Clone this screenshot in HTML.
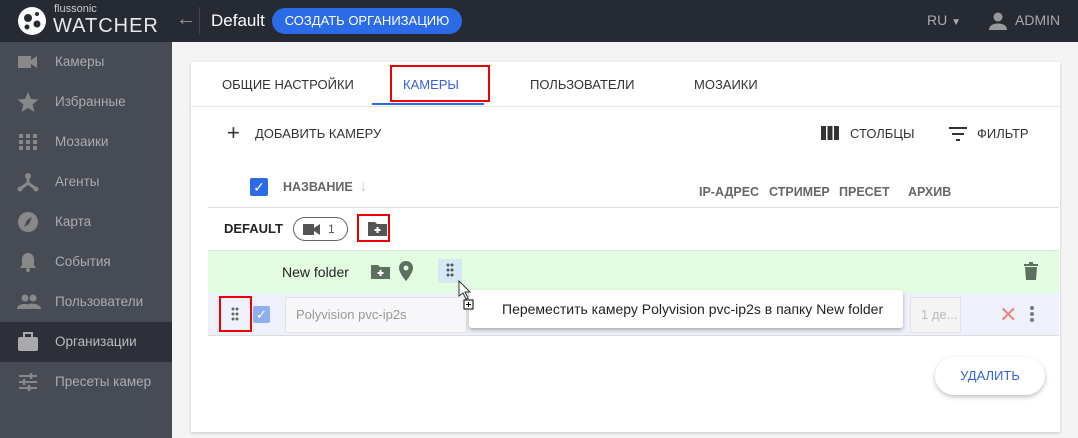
<!DOCTYPE html>
<html><head><meta charset="utf-8"><style>
*{box-sizing:border-box;margin:0;padding:0}
body{width:1078px;height:438px;overflow:hidden;background:#f4f4f4;font-family:"Liberation Sans",sans-serif;position:relative}
.a{position:absolute}
.top{left:0;top:0;width:1078px;height:42px;background:#262a33}
.side{left:0;top:42px;width:172px;height:396px;background:#474b53}
.si{position:absolute;left:0;width:172px;height:40px;color:#a9acb1;font-size:13.5px;line-height:40px;padding-left:55px}
.si svg{position:absolute;left:17px;top:10px}
.card{left:191px;top:62px;width:869px;height:370px;background:#fff;box-shadow:0 1px 3px rgba(0,0,0,.2)}
.t{font-size:13px;color:#333}
.h{font-size:12.5px;font-weight:bold;color:#666}
</style></head><body>
<div class="a top"></div>
<svg class="a" style="left:17px;top:6px" width="30" height="30" viewBox="0 0 30 30"><circle cx="15" cy="15" r="14" fill="#fff"/><circle cx="11" cy="12" r="4" fill="#262a33"/><circle cx="20" cy="18" r="3.5" fill="#262a33"/><circle cx="10" cy="21" r="2.5" fill="#262a33"/><circle cx="20" cy="8" r="2" fill="#262a33"/></svg>
<div class="a" style="left:54px;top:3px;color:#ccc;font-size:11px">flussonic</div>
<div class="a" style="left:53px;top:15px;color:#e8e8e8;font-size:20px;letter-spacing:1px;font-weight:300">WATCHER</div>
<div class="a" style="left:176px;top:8px;color:#999;font-size:20px">←</div>
<div class="a" style="left:199px;top:7px;width:1px;height:28px;background:#444"></div>
<div class="a" style="left:211px;top:11px;color:#fff;font-size:17px">Default</div>
<div class="a" style="left:272px;top:8px;width:190px;height:26px;border-radius:13px;background:#2b6be8;color:#fff;font-size:13px;line-height:26px;text-align:center">СОЗДАТЬ ОРГАНИЗАЦИЮ</div>
<div class="a" style="left:927px;top:12px;color:#aaa;font-size:14px">RU <span style="font-size:10px">▼</span></div>
<svg class="a" style="left:988px;top:11px" width="20" height="20" viewBox="0 0 20 20"><circle cx="10" cy="6" r="4.5" fill="#999"/><path d="M1 19c0-5 5-6.5 9-6.5s9 1.5 9 6.5z" fill="#999"/></svg>
<div class="a" style="left:1015px;top:12px;color:#aaa;font-size:14px">ADMIN</div>

<div class="a side">
<div class="si" style="top:0"><svg width="22" height="20"><rect x="1" y="4" width="13" height="12" fill="#888"/><path d="M14 8l6-4v12l-6-4z" fill="#888"/></svg>Камеры</div>
<div class="si" style="top:40px"><svg width="22" height="20"><path d="M11 0l3 7 7.5.5-6 5 2 7.5-6.5-4-6.5 4 2-7.5-6-5 7.5-.5z" fill="#888"/></svg>Избранные</div>
<div class="si" style="top:80px"><svg width="22" height="20" fill="#888"><rect x="2" y="2" width="4" height="4"/><rect x="9" y="2" width="4" height="4"/><rect x="16" y="2" width="4" height="4"/><rect x="2" y="8" width="4" height="4"/><rect x="9" y="8" width="4" height="4"/><rect x="16" y="8" width="4" height="4"/><rect x="2" y="14" width="4" height="4"/><rect x="9" y="14" width="4" height="4"/><rect x="16" y="14" width="4" height="4"/></svg>Мозаики</div>
<div class="si" style="top:120px"><svg width="22" height="20"><path d="M11 4v7M11 11L3 17M11 11l8 6" stroke="#888" stroke-width="3"/><circle cx="11" cy="4" r="3" fill="#888"/><circle cx="3" cy="17" r="2.5" fill="#888"/><circle cx="19" cy="17" r="2.5" fill="#888"/></svg>Агенты</div>
<div class="si" style="top:160px"><svg width="22" height="20"><circle cx="11" cy="10" r="10" fill="#888"/><path d="M15 5l-3 7-5 3 3-7z" fill="#474b53"/></svg>Карта</div>
<div class="si" style="top:200px"><svg width="22" height="20"><path d="M11 1c-4 0-6 3-6 7v5l-2 3h16l-2-3V8c0-4-2-7-6-7z" fill="#888"/><circle cx="11" cy="18" r="2" fill="#888"/></svg>События</div>
<div class="si" style="top:240px"><svg width="24" height="20" fill="#888"><circle cx="8" cy="6" r="3.5"/><circle cx="16" cy="6" r="3.5"/><path d="M0 17c0-4 4-5 8-5s8 1 8 5z"/><path d="M12 12c3-1 12 0 12 5h-7z"/></svg>Пользователи</div>
<div class="si" style="top:280px;background:#2d3038;color:#bbb"><svg width="22" height="20"><rect x="1" y="5" width="20" height="14" rx="2" fill="#aaa"/><rect x="7" y="1" width="8" height="5" fill="none" stroke="#aaa" stroke-width="2"/></svg>Организации</div>
<div class="si" style="top:320px"><svg width="22" height="20" stroke="#888" stroke-width="2"><path d="M2 4h18M2 10h18M2 16h18"/><path d="M14 1v6M7 7v6M12 13v6" stroke-width="2.5"/></svg>Пресеты камер</div>
</div>

<div class="a card">
<div class="a t" style="left:31px;top:15px">ОБЩИЕ НАСТРОЙКИ</div>
<div class="a t" style="left:212px;top:15px;color:#3561e0">КАМЕРЫ</div>
<div class="a" style="left:199px;top:3px;width:100px;height:37px;border:2px solid #e00"></div>
<div class="a" style="left:181px;top:41px;width:112px;height:2px;background:#2b6be8"></div>
<div class="a t" style="left:339px;top:15px">ПОЛЬЗОВАТЕЛИ</div>
<div class="a t" style="left:503px;top:15px">МОЗАИКИ</div>
<div class="a" style="left:0;top:44px;width:869px;height:1px;background:#e5e5e5"></div>
<div class="a" style="left:36px;top:61px;font-size:22px;color:#333;line-height:20px">+</div>
<div class="a" style="left:64px;top:64px;font-size:13px;color:#333">ДОБАВИТЬ КАМЕРУ</div>
<svg class="a" style="left:630px;top:64px" width="18" height="14" fill="#333"><rect x="0" y="0" width="5" height="14"/><rect x="6.5" y="0" width="5" height="14"/><rect x="13" y="0" width="5" height="14"/></svg>
<div class="a" style="left:659px;top:64px;font-size:13px;color:#333">СТОЛБЦЫ</div>
<svg class="a" style="left:758px;top:65px" width="18" height="14" fill="#333"><rect x="0" y="0" width="18" height="2"/><rect x="3" y="6" width="12" height="2"/><rect x="7" y="12" width="4" height="2"/></svg>
<div class="a" style="left:786px;top:64px;font-size:13px;color:#333">ФИЛЬТР</div>
<div class="a" style="left:59px;top:116px;width:18px;height:18px;border-radius:2px;background:#2b6be8;color:#fff;font-size:14px;line-height:18px;text-align:center">✓</div>
<div class="a h" style="left:92px;top:118px">НАЗВАНИЕ</div>
<div class="a" style="left:168px;top:114px;color:#ccc;font-size:17px">↓</div>
<div class="a h" style="left:508px;top:123px">IP-АДРЕС</div>
<div class="a h" style="left:578px;top:123px">СТРИМЕР</div>
<div class="a h" style="left:648px;top:123px">ПРЕСЕТ</div>
<div class="a h" style="left:717px;top:123px">АРХИВ</div>
<div class="a" style="left:17px;top:145px;width:851px;height:1px;background:#ddd"></div>
<div class="a" style="left:33px;top:159px;font-size:13px;font-weight:bold;color:#222">DEFAULT</div>
<div class="a" style="left:102px;top:155px;width:55px;height:24px;border:1px solid #666;border-radius:12px"></div>
<svg class="a" style="left:112px;top:162px" width="18" height="11" fill="#555"><rect x="0" y="0" width="11" height="11"/><path d="M11 4l6-4v11l-6-4z"/></svg>
<div class="a" style="left:137px;top:160px;font-size:12px;color:#555">1</div>
<div class="a" style="left:166px;top:152px;width:33px;height:28px;border:2px solid #e00"></div>
<svg class="a" style="left:177px;top:158px" width="19" height="16"><path d="M0 2h7l2 2h10v12H0z" fill="#555"/><path d="M9.5 7v6M6.5 10h6" stroke="#fff" stroke-width="2"/></svg>
<div class="a" style="left:17px;top:188px;width:851px;height:1px;background:#ddd"></div>
<div class="a" style="left:17px;top:189px;width:851px;height:42px;background:#e3fde0"></div>
<div class="a" style="left:91px;top:202px;font-size:14px;color:#222">New folder</div>
<svg class="a" style="left:180px;top:201px" width="19" height="16"><path d="M0 2h7l2 2h10v12H0z" fill="#5d7160"/><path d="M9.5 7v6M6.5 10h6" stroke="#fff" stroke-width="2"/></svg>
<svg class="a" style="left:208px;top:199px" width="14" height="20"><path d="M7 0C3 0 0 3 0 7c0 5 7 13 7 13s7-8 7-13c0-4-3-7-7-7z" fill="#5d7160"/><circle cx="7" cy="7" r="2.5" fill="#e3fde0"/></svg>
<div class="a" style="left:247px;top:197px;width:24px;height:24px;background:#d5e9f5"></div>
<svg class="a" style="left:255px;top:201px" width="8" height="14" fill="#555"><circle cx="2" cy="2" r="1.5"/><circle cx="6" cy="2" r="1.5"/><circle cx="2" cy="7" r="1.5"/><circle cx="6" cy="7" r="1.5"/><circle cx="2" cy="12" r="1.5"/><circle cx="6" cy="12" r="1.5"/></svg>
<svg class="a" style="left:833px;top:200px" width="14" height="18" fill="#5d7160"><rect x="0" y="2" width="14" height="2"/><rect x="5" y="0" width="4" height="2"/><path d="M1 5h12l-1 13H2z"/></svg>
<div class="a" style="left:17px;top:231px;width:851px;height:43px;background:#eef1fb;border-bottom:1px solid #ddd"></div>
<div class="a" style="left:28px;top:234px;width:33px;height:36px;border:2px solid #e00"></div>
<svg class="a" style="left:40px;top:245px" width="8" height="14" fill="#666"><circle cx="2" cy="2" r="1.5"/><circle cx="6" cy="2" r="1.5"/><circle cx="2" cy="7" r="1.5"/><circle cx="6" cy="7" r="1.5"/><circle cx="2" cy="12" r="1.5"/><circle cx="6" cy="12" r="1.5"/></svg>
<div class="a" style="left:62px;top:244px;width:17px;height:17px;border-radius:2px;background:#8fb0ef;color:#fff;font-size:13px;line-height:17px;text-align:center">✓</div>
<div class="a" style="left:94px;top:235px;width:182px;height:36px;border:1px solid #e2e2e2;background:#f7f7f9;color:#999;font-size:13px;line-height:34px;padding-left:10px">Polyvision pvc-ip2s</div>
<div class="a" style="left:719px;top:235px;width:51px;height:36px;border:1px solid #e2e2e2;background:#f4f4f4;color:#bbb;font-size:13px;line-height:34px;padding-left:10px">1 де...</div>
<div class="a" style="left:808px;top:240px;color:#ef8a7a;font-size:22px">✕</div>
<svg class="a" style="left:838px;top:243px" width="6" height="18" fill="#777"><circle cx="3" cy="3" r="2"/><circle cx="3" cy="9" r="2"/><circle cx="3" cy="15" r="2"/></svg>
<div class="a" style="left:278px;top:228px;width:434px;height:38px;background:#fff;border-radius:3px;box-shadow:0 2px 4px rgba(0,0,0,.3);font-size:14px;color:#222;line-height:38px;padding-left:33px">Переместить камеру Polyvision pvc-ip2s в папку New folder</div>
<svg class="a" style="left:266px;top:218px" width="18" height="32"><path d="M2 1v15l4-3 3 6 2-1-3-6h5z" fill="#fff" stroke="#333"/><rect x="7" y="20" width="9" height="9" fill="#fff" stroke="#000"/><path d="M11.5 22v5M9 24.5h5" stroke="#000"/></svg>
<div class="a" style="left:744px;top:295px;width:110px;height:38px;border-radius:19px;background:#fff;box-shadow:0 2px 5px rgba(0,0,0,.25);color:#3561e0;font-size:13px;line-height:38px;text-align:center">УДАЛИТЬ</div>
</div>
</body></html>
